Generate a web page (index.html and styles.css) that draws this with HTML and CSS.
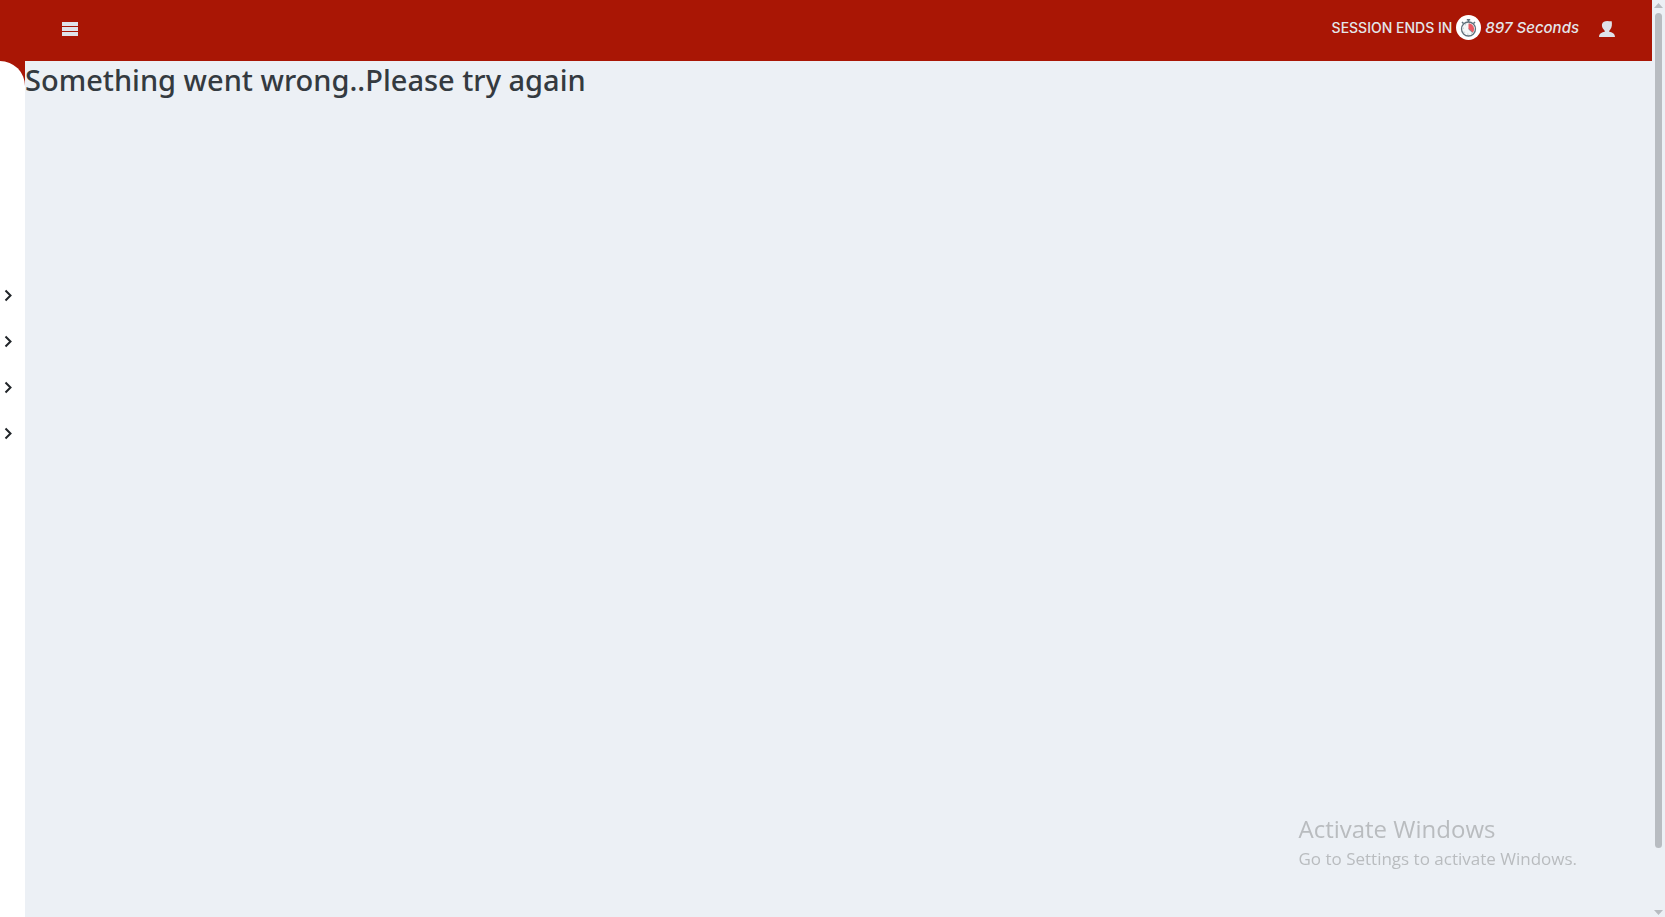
FILE: index.html
```
<!DOCTYPE html>
<html lang="en">
<head>
    <meta charset="utf-8">
    <title>Something went wrong</title>
    <link rel="stylesheet" href="styles.css">
</head>
<body>
    <div class="page">
        <header class="topbar">
            <button class="icon-button" aria-label="Toggle menu">
                <svg width="16" height="14" viewBox="0 0 16 14"><path d="M0 0h16v4H0zM0 5h16v4H0zM0 10h16v4H0z" fill="#dfe3ea"/></svg>
            </button>
            <div class="session">
                <span>SESSION ENDS IN</span>
                <!-- Stopwatch -->
                <svg class="clock" width="25" height="25" viewBox="0 0 25 25">
                    <circle cx="12.5" cy="12.5" r="12.5" fill="#fff"/>
                    <path d="M12.5 4v3M10.8 4.700h3.400M6 7l1.500 1.500M19 7l-1.500 1.500" stroke="#60717b" stroke-width="1.500"/>
                    <circle cx="12.5" cy="14" r="7" fill="#f5f7f8" stroke="#60717b" stroke-width="1.300"/>
                    <path d="M12.5 14V8.500A5.500 5.500 0 0 1 16.800 17.500z" fill="#ee5a63"/>
                    <path d="M12.5 14l4 3.500" fill="none" stroke="#60717b" stroke-width=".7"/>
                    <circle cx="12.5" cy="14" r="5.200" fill="none" stroke="#8a989f" stroke-width=".8" stroke-dasharray=".8 3.300"/>
                </svg>
                <em id="seconds">897 Seconds</em>
            </div>
            <button class="icon-button" aria-label="User profile">
                <svg width="16" height="16" viewBox="0 0 16 16"><path d="M8.400 0C10.200 0 11.600.5 12.700.2c.5 3.200.3 6.200-1.400 8.300-.6.700-1.100 1.200-1.100 2.300 3 .8 5.400 1.200 5.800 5.200H0c.4-4 2.800-4.400 5.800-5.200 0-1.100-.5-1.600-1.100-2.300C3.200 7 2.700 4.800 3 3.200 3.500 1.200 5.700 0 8.400 0z" fill="#dfe3ea"/></svg>
            </button>
        </header>
        <div class="layout">
            <div class="sidebar-wrap">
                <nav class="sidebar" aria-label="Main menu">
                    <button class="menu-arrow" aria-label="Open menu 1"><svg width="8" height="12" viewBox="0 0 8 12"><path d="M1.500 1.500l5 5-5 5"/></svg></button>
                    <button class="menu-arrow" aria-label="Open menu 2"><svg width="8" height="12" viewBox="0 0 8 12"><path d="M1.500 1.500l5 5-5 5"/></svg></button>
                    <button class="menu-arrow" aria-label="Open menu 3"><svg width="8" height="12" viewBox="0 0 8 12"><path d="M1.500 1.500l5 5-5 5"/></svg></button>
                    <button class="menu-arrow" aria-label="Open menu 4"><svg width="8" height="12" viewBox="0 0 8 12"><path d="M1.500 1.500l5 5-5 5"/></svg></button>
                </nav>
            </div>
            <main class="content">
                <h2>Something went wrong..Please try again</h2>
            </main>
        </div>
    </div>

    <div class="scrollbar" aria-hidden="true">
        <svg width="9" height="5" viewBox="0 0 9 5"><path d="M0 5l4.500-5L9 5z" fill="#b8bcc1"/></svg>
        <div class="scroll-track"><div class="scroll-thumb"></div></div>
        <svg width="9" height="5" viewBox="0 0 9 5"><path d="M0 0l4.500 5L9 0z" fill="#b8bcc1"/></svg>
    </div>

    <div class="watermark">
        <p class="watermark-title">Activate Windows</p>
        <p>Go to Settings to activate Windows.</p>
    </div>
</body>
</html>
```

FILE: styles.css
```
* {
    box-sizing: border-box;
}

body {
    display: flex;
    min-height: 100vh;
    margin: 0;
    background-color: #ecf0f5;
    font-family: "Open Sans", sans-serif;
}

button {
    padding: 0;
    border: none;
    background: none;
    cursor: pointer;
}

svg {
    display: block;
}

.page {
    display: flex;
    flex-direction: column;
    flex: 1;
}

/* Top bar */
.topbar {
    display: flex;
    align-items: center;
    padding: 15px 37px 21px 62px;
    background-color: #a91605;
}

.icon-button {
    padding-top: 2px;
}

.session {
    display: flex;
    align-items: center;
    gap: 4px;
    margin-left: auto;
    margin-right: 20px;
    color: #e4e6ea;
    font-family: Inter, sans-serif;
    font-size: 14px;
    font-weight: 500;
    line-height: 20px;
}

#seconds {
    font-size: 15px;
}

/* Sidebar and content */
.layout {
    display: flex;
    flex: 1;
}

.sidebar-wrap {
    display: flex;
    width: 25px;
    background: linear-gradient(#a91605 25px, #fff 25px);
}

.sidebar {
    flex: 1;
    padding-top: 211px;
    background-color: #fff;
    border-top-right-radius: 25px;
}

.menu-arrow {
    display: flex;
    align-items: center;
    width: 100%;
    height: 46px;
    padding-left: 4px;
}

.menu-arrow svg {
    overflow: visible;
}

.menu-arrow path {
    fill: none;
    stroke: #212529;
    stroke-width: 2;
}

.content {
    flex: 1;
}

h2 {
    margin: 0;
    color: #343a40;
    font-family: "Noto Sans", sans-serif;
    font-size: 29px;
    font-weight: 500;
    line-height: 38px;
}

/* Scrollbar */
.scrollbar {
    display: flex;
    flex-direction: column;
    align-items: center;
    width: 13px;
    padding: 3px 0 2px;
}

.scroll-track {
    display: flex;
    flex: 1;
    padding: 5px 0 62px;
}

.scroll-thumb {
    width: 7px;
    border-radius: 4px;
    background-color: #b8bcc1;
}

/* Desktop watermark over the page */
.watermark {
    position: fixed;
    right: 88px;
    bottom: 45px;
    color: #b9bcbf;
    font-size: 17px;
    line-height: 26px;
}

.watermark p {
    margin: 0;
}

.watermark .watermark-title {
    font-size: 24px;
    line-height: 34px;
}
```
